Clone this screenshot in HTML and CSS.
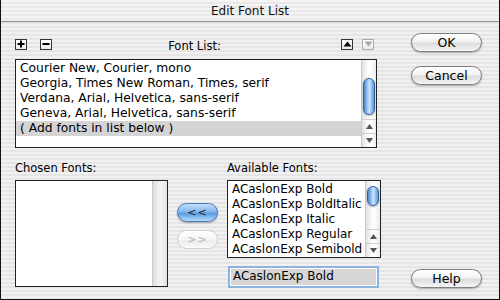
FILE: index.html
```html
<!DOCTYPE html>
<html lang="en">
<head>
    <meta charset="UTF-8">
    <title>Edit Font List</title>
    <link rel="stylesheet" href="styles.css">
</head>
<body>

    <div class="window">
        <div class="titlebar">Edit Font List</div>

        <div class="content">
            <div class="main">
                <div class="list-head">
                    <div class="tools">
                        <span class="tool">
                            <svg width="8" height="8" viewBox="0 0 8 8"><path d="M4 0.5V7.5M0.5 4H7.5" stroke="#000" stroke-width="2"/></svg>
                        </span>
                        <span class="tool">
                            <svg width="8" height="8" viewBox="0 0 8 8"><path d="M0.5 4H7.5" stroke="#000" stroke-width="2"/></svg>
                        </span>
                    </div>
                    <div class="head-label">Font List:</div>
                    <div class="tools tools-right">
                        <span class="tool">
                            <svg width="9" height="6" viewBox="0 0 9 6"><path d="M0.5 5.5L4.5 0.5L8.5 5.5Z" fill="#000"/></svg>
                        </span>
                        <span class="tool off">
                            <svg width="9" height="6" viewBox="0 0 9 6"><path d="M0.5 0.5L4.5 5.5L8.5 0.5Z" fill="#a8a8a8"/></svg>
                        </span>
                    </div>
                </div>

                <div class="listbox font-list">
                    <ul class="rows">
                        <li>Courier New, Courier, mono</li>
                        <li>Georgia, Times New Roman, Times, serif</li>
                        <li>Verdana, Arial, Helvetica, sans-serif</li>
                        <li>Geneva, Arial, Helvetica, sans-serif</li>
                        <li class="selected">( Add fonts in list below )</li>
                    </ul>
                    <div class="scrollbar">
                        <div class="track">
                            <div class="thumb thumb-big"></div>
                        </div>
                        <div class="arrows">
                            <span class="arr"><svg width="7" height="5" viewBox="0 0 7 5"><path d="M0 5L3.5 0L7 5Z" fill="#555"/></svg></span>
                            <span class="arr"><svg width="7" height="5" viewBox="0 0 7 5"><path d="M0 0L3.5 5L7 0Z" fill="#555"/></svg></span>
                        </div>
                    </div>
                </div>

                <div class="lower">
                    <div class="col chosen">
                        <div class="label">Chosen Fonts:</div>
                        <div class="listbox chosen-box">
                            <ul class="rows"></ul>
                            <div class="scrollbar empty"></div>
                        </div>
                    </div>

                    <div class="movers">
                        <button class="pill blue">&lt;&lt;</button>
                        <button class="pill off">&gt;&gt;</button>
                    </div>

                    <div class="col avail">
                        <div class="label">Available Fonts:</div>
                        <div class="listbox avail-box">
                            <ul class="rows">
                                <li>ACaslonExp Bold</li>
                                <li>ACaslonExp BoldItalic</li>
                                <li>ACaslonExp Italic</li>
                                <li>ACaslonExp Regular</li>
                                <li>ACaslonExp Semibold</li>
                            </ul>
                            <div class="scrollbar">
                                <div class="track">
                                    <div class="thumb thumb-small"></div>
                                </div>
                                <div class="arrows">
                                    <span class="arr"><svg width="7" height="5" viewBox="0 0 7 5"><path d="M0 5L3.5 0L7 5Z" fill="#555"/></svg></span>
                                    <span class="arr"><svg width="7" height="5" viewBox="0 0 7 5"><path d="M0 0L3.5 5L7 0Z" fill="#555"/></svg></span>
                                </div>
                            </div>
                        </div>
                        <div class="field"><span class="field-text">ACaslonExp Bold</span></div>
                    </div>
                </div>
            </div>

            <div class="side">
                <button class="pill wide">OK</button>
                <button class="pill wide">Cancel</button>
                <button class="pill wide help">Help</button>
            </div>
        </div>
    </div>

</body>
</html>
```

FILE: styles.css
```css
body {
    margin: 0;
    font-family: "DejaVu Sans", sans-serif;
    font-size: 11.5px;
    color: #000;
}
.window {
    box-sizing: border-box;
    width: 500px;
    height: 300px;
    border: 1px solid #111;
    border-top: none;
    background: repeating-linear-gradient(to bottom, #f1f1f1 0, #f1f1f1 2px, #e5e5e5 2px, #e5e5e5 4px);
    display: flex;
    flex-direction: column;
}
.titlebar {
    height: 21px;
    line-height: 22px;
    text-align: center;
    font-size: 12px;
    color: #111;
    border-bottom: 1px solid #8a8a8a;
    background: repeating-linear-gradient(to bottom, #f4f4f4 0, #f4f4f4 2px, #e8e8e8 2px, #e8e8e8 4px);
}
.content {
    flex: 1;
    display: flex;
    padding: 11px 16px 18px 14px;
}
.main {
    width: 366px;
}
.side {
    width: 72px;
    margin-left: auto;
    display: flex;
    flex-direction: column;
    gap: 14px;
}
.side .help {
    margin-top: auto;
}

/* header row above the font list */
.list-head {
    display: grid;
    grid-template-columns: 1fr auto 1fr;
    align-items: center;
    height: 14px;
    margin-top: 2px;
    padding-right: 7px;
}
.tools {
    display: flex;
    gap: 13px;
}
.tools-right {
    justify-content: flex-end;
    gap: 9px;
}
.tool {
    box-sizing: border-box;
    width: 12px;
    height: 11px;
    border: 1px solid #333;
    background: linear-gradient(#fff, #e9e9e9);
    display: flex;
    align-items: center;
    justify-content: center;
}
.tool.off {
    border-color: #aaa;
}
.head-label {
    padding-top: 4px;
}

/* list boxes */
.listbox {
    box-sizing: border-box;
    border: 1px solid #222;
    background: #fff;
    display: flex;
}
.rows {
    list-style: none;
    margin: 0;
    padding: 1px 0 0;
    flex: 1;
    overflow: hidden;
}
.rows li {
    height: 15px;
    line-height: 15px;
    padding-left: 4px;
    white-space: nowrap;
}
.rows li.selected {
    background: #d4d4d4;
}
.font-list {
    width: 362px;
    height: 89px;
    margin-top: 10px;
}
.font-list .rows li {
    font-size: 12.3px;
}
.avail-box .rows li {
    font-size: 12px;
}
.scrollbar {
    width: 14px;
    border-left: 1px solid #c8c8c8;
    background: linear-gradient(to right, #e2e2e2, #fafafa 40%, #fff 60%, #ececec);
    display: flex;
    flex-direction: column;
}
.scrollbar.empty {
    background: linear-gradient(to right, #dcdcdc, #f0f0f0 40%, #f4f4f4 60%, #e2e2e2);
}
.track {
    flex: 1;
    position: relative;
}
.thumb {
    position: absolute;
    left: 1px;
    right: 1px;
    border: 1px solid #2e5f9e;
    border-radius: 6px;
    background: linear-gradient(to right, #4d86cc, #a9d0f7 40%, #c7e2fb 55%, #5d97d8);
    box-shadow: 0 1px 2px rgba(0, 0, 0, 0.3);
}
.thumb-big {
    top: 18px;
    height: 35px;
}
.thumb-small {
    top: 5px;
    height: 18px;
}
.arrows {
    display: flex;
    flex-direction: column;
}
.arr {
    height: 13px;
    display: flex;
    align-items: center;
    justify-content: center;
    border-top: 1px solid #cfcfcf;
}

/* lower area */
.lower {
    display: flex;
    margin-top: 14px;
}
.label {
    height: 18px;
    line-height: 12px;
}
.chosen {
    width: 154px;
}
.chosen-box {
    height: 107px;
}
.movers {
    width: 41px;
    margin: 41px 9px 0;
    display: flex;
    flex-direction: column;
    gap: 8px;
}
.avail {
    width: 155px;
}
.avail-box {
    height: 78px;
}
.field {
    box-sizing: border-box;
    width: 151px;
    height: 22px;
    margin: 8px 0 0 1px;
    border: 2px solid #8fb3e0;
    padding: 1px;
    background: #fff;
    display: flex;
}
.field-text {
    flex: 1;
    background: #d6d6d6;
    line-height: 14px;
    padding-left: 2px;
    font-size: 12px;
}

/* aqua buttons */
.pill {
    box-sizing: border-box;
    height: 19px;
    padding: 0;
    font-family: "DejaVu Sans", sans-serif;
    font-size: 11px;
    color: #222;
    border: 1px solid #7e7e7e;
    border-radius: 10px;
    background: linear-gradient(#ffffff, #f3f3f3 45%, #dcdcdc 55%, #f6f6f6);
    box-shadow: 0 1px 2px rgba(0, 0, 0, 0.3);
}
.pill.wide {
    width: 71px;
    height: 19px;
    font-size: 12.5px;
    color: #000;
}
.pill.blue {
    border-color: #4a78b4;
    background: linear-gradient(#c4e0fb, #82b8ee 45%, #5a9ae3 55%, #b5dcfc);
    letter-spacing: 1px;
}
.pill.off {
    color: #b0b0b0;
    border-color: #cfcfcf;
    box-shadow: none;
    background: linear-gradient(#fff, #f5f5f5 50%, #ebebeb 55%, #fafafa);
    letter-spacing: 1px;
}
```
